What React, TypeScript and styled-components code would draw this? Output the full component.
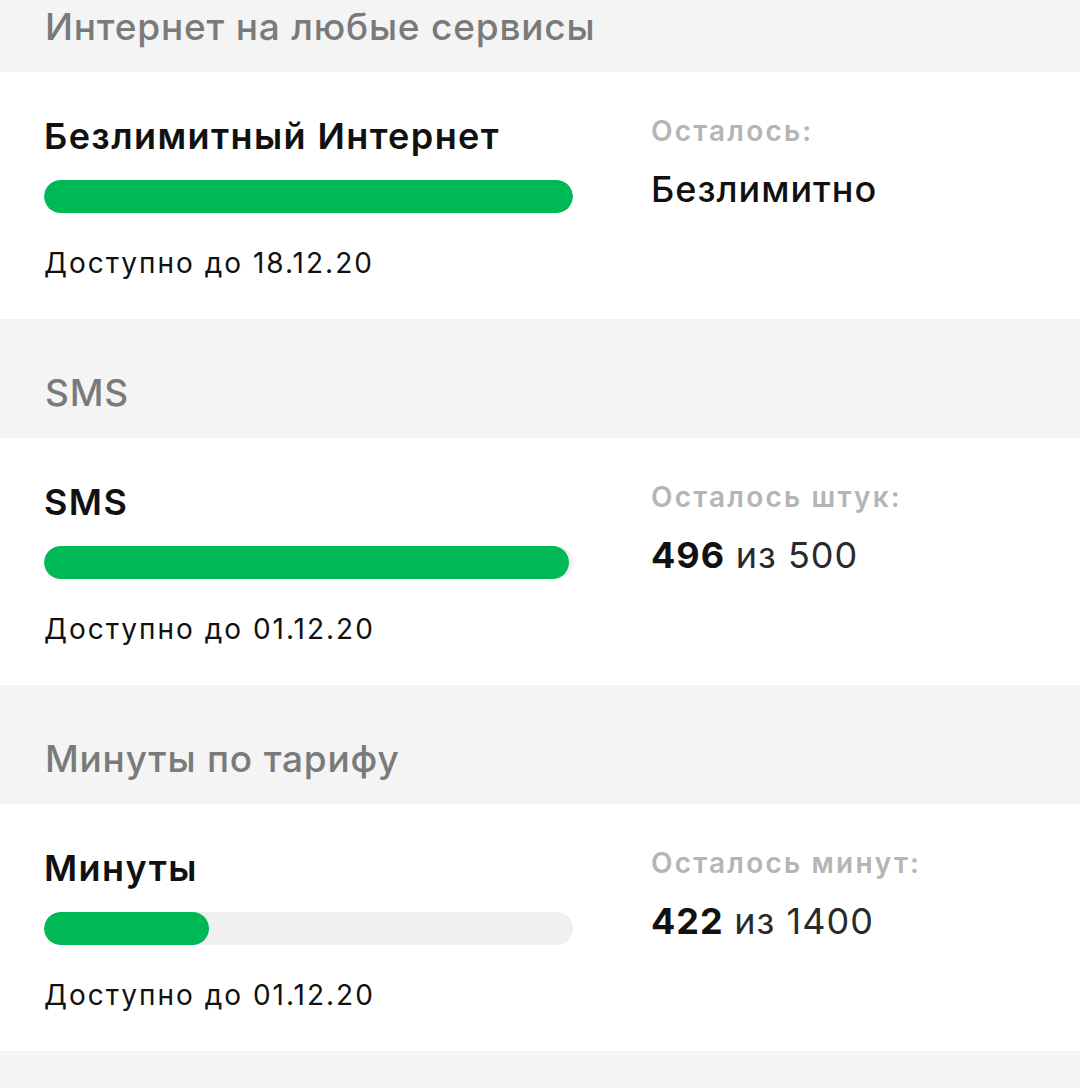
import React, { FC } from "react";
import styled, { createGlobalStyle } from "styled-components";

const GlobalStyle = createGlobalStyle`
  body {
    margin: 0;
    background: #f4f4f4;
    font-family: Inter, Roboto, "Noto Sans", sans-serif;
  }
`;

const Page = styled.div`
  display: flex;
  flex-direction: column;
  width: 1080px;
  height: 1088px;
  overflow: hidden;
`;

const SectionHeader = styled.div<{ $clipped?: boolean }>`
  flex-shrink: 0;
  display: flex;
  align-items: flex-end;
  box-sizing: border-box;
  height: ${(p) => (p.$clipped ? 72 : 119)}px;
  padding: 0 0 23px 45px;
  background: #f4f4f4;
  color: #7a7a7a;
  font-size: 37px;
  font-weight: 500;
  letter-spacing: 0.8px;
  line-height: 44px;
`;

const Card = styled.div`
  flex-shrink: 0;
  display: grid;
  grid-template-columns: 529px 1fr;
  column-gap: 78px;
  box-sizing: border-box;
  height: 247px;
  padding: 42px 44px 0;
  background: #ffffff;
`;

const LeftCol = styled.div`
  display: flex;
  flex-direction: column;
`;

const RightCol = styled.div`
  display: flex;
  flex-direction: column;
`;

const Title = styled.div`
  color: #111;
  font-size: 36px;
  font-weight: 600;
  letter-spacing: 1.4px;
  line-height: 44px;
`;

const Track = styled.div`
  margin-top: 22px;
  height: 33px;
  border-radius: 17px;
  background: #efefef;
  overflow: hidden;
`;

const Fill = styled.div`
  height: 100%;
  border-radius: 17px;
  background: #00b956;
`;

const DateText = styled.div`
  margin-top: 32px;
  color: #111;
  font-size: 28px;
  font-weight: 400;
  letter-spacing: 2px;
  line-height: 36px;
`;

const Label = styled.div`
  margin-top: -1px;
  color: #b5b5b5;
  font-size: 28px;
  font-weight: 600;
  letter-spacing: 2.2px;
  line-height: 36px;
`;

const Value = styled.div`
  margin-top: 18px;
  color: #111;
  font-size: 36px;
  font-weight: 500;
  letter-spacing: 1px;
  line-height: 44px;
`;

const Strong = styled.span`
  font-weight: 700;
`;

const Muted = styled.span`
  font-weight: 400;
  color: #2a2a2a;
`;

interface UsageProps {
  title: string;
  until: string;
  label: string;
  ratio: number;
  left?: number;
  total?: number;
}

const Usage: FC<UsageProps> = ({ title, until, label, ratio, left, total }) => (
  <Card>
    <LeftCol>
      <Title>{title}</Title>
      <Track>
        <Fill style={{ width: `${ratio * 100}%` }} />
      </Track>
      <DateText>Доступно до {until}</DateText>
    </LeftCol>
    <RightCol>
      <Label>{label}</Label>
      <Value>
        {left === undefined ? (
          "Безлимитно"
        ) : (
          <>
            <Strong>{left}</Strong> <Muted>из {total}</Muted>
          </>
        )}
      </Value>
    </RightCol>
  </Card>
);

export default function App() {
  return (
    <Page>
      <GlobalStyle />
      <SectionHeader $clipped>Интернет на любые сервисы</SectionHeader>
      <Usage title="Безлимитный Интернет" until="18.12.20" label="Осталось:" ratio={1} />
      <SectionHeader>SMS</SectionHeader>
      <Usage title="SMS" until="01.12.20" label="Осталось штук:" ratio={496 / 500} left={496} total={500} />
      <SectionHeader>Минуты по тарифу</SectionHeader>
      <Usage title="Минуты" until="01.12.20" label="Осталось минут:" ratio={0.312} left={422} total={1400} />
      <SectionHeader />
    </Page>
  );
}
